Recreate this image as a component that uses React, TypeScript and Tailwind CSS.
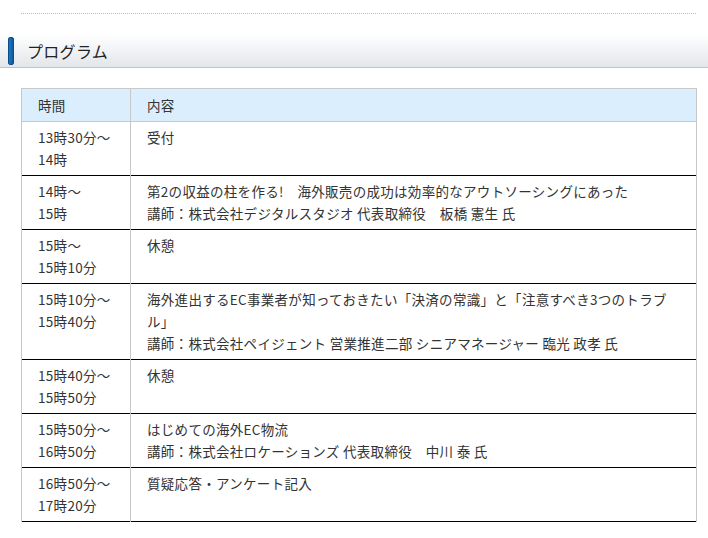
import React from 'react';

const rows: [string[], string[]][] = [
  [['13時30分～', '14時'], ['受付']],
  [['14時～', '15時'], ['第2の収益の柱を作る!　海外販売の成功は効率的なアウトソーシングにあった', '講師：株式会社デジタルスタジオ 代表取締役　板橋 憲生 氏']],
  [['15時～', '15時10分'], ['休憩']],
  [['15時10分～', '15時40分'], ['海外進出するEC事業者が知っておきたい「決済の常識」と「注意すべき3つのトラブル」', '講師：株式会社ペイジェント 営業推進二部 シニアマネージャー 臨光 政孝 氏']],
  [['15時40分～', '15時50分'], ['休憩']],
  [['15時50分～', '16時50分'], ['はじめての海外EC物流', '講師：株式会社ロケーションズ 代表取締役　中川 泰 氏']],
  [['16時50分～', '17時20分'], ['質疑応答・アンケート記入']],
];

export default function App() {
  return (
    <div className="w-[708px] h-[538px] bg-white text-[#333] text-[13.5px] tracking-[0.3px] leading-[22px]" style={{ fontFamily: 'Meiryo, "Noto Sans CJK JP", sans-serif' }}>
      <div className="pt-[13px] pl-[21px] pr-[12px]">
        <div className="border-t border-dotted border-[#bbb]" />
      </div>
      <div className="mt-[20px] h-[34px] flex items-center border-b border-[#b8c4cc] bg-gradient-to-b from-white to-[#e3e6ea]">
        <div className="ml-[8px] w-[6px] h-[28px] rounded-[2px] border border-[#0b4d8a] bg-gradient-to-r from-[#1f78c0] to-[#0d5aa0]" />
        <div className="ml-[13px] text-[16px] text-[#222]">プログラム</div>
      </div>
      <table className="mt-[20px] ml-[21px] w-[676px] border-collapse">
        <thead>
          <tr className="bg-[#dbeefe] h-[33px]">
            <th className="w-[109px] border border-[#c8c8c8] text-left font-normal pl-[16px]">時間</th>
            <th className="border border-[#c8c8c8] text-left font-normal pl-[16px]">内容</th>
          </tr>
        </thead>
        <tbody>
          {rows.map(([t, c], i) => (
            <tr key={i} className="border-b border-b-black">
              <td className="align-top border-l border-r border-[#c8c8c8] pl-[16px] pt-[4px] pb-[5px] h-[54px]">
                {t.map((s, j) => <div key={j}>{s}</div>)}
              </td>
              <td className="align-top border-r border-[#c8c8c8] pl-[16px] pr-[14px] pt-[4px] pb-[5px]">
                {c.map((s, j) => <div key={j}>{s}</div>)}
              </td>
            </tr>
          ))}
        </tbody>
      </table>
    </div>
  );
}
